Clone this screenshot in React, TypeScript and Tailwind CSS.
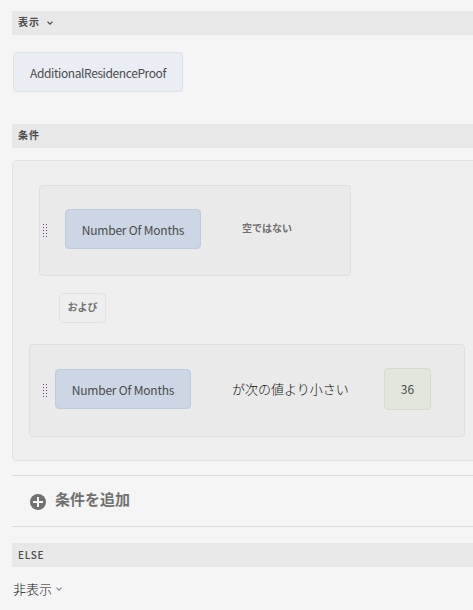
import type { ReactNode } from "react";

function SectionHeader({ children }: { children: ReactNode }) {
  return (
    <div className="flex h-6 shrink-0 items-center bg-[#e8e8e8] pl-1.5 text-[10px] leading-none font-bold tracking-[1px] text-[#4b4b4b]">
      {children}
    </div>
  );
}

function Chevron({ className }: { className: string }) {
  return (
    <svg viewBox="0 0 6 4" fill="none" stroke="currentColor" strokeWidth="1.3" className={className}>
      <path d="M0.5 0.6 L3 3.1 L5.5 0.6" />
    </svg>
  );
}

function DragHandle() {
  return (
    <div className="grid w-1 grid-cols-2 gap-x-0.5 gap-y-0.5">
      {Array.from({ length: 10 }, (_, i) => (
        <span key={i} className="size-px bg-[#70407e]" />
      ))}
    </div>
  );
}

function MonthsChip() {
  return (
    <div className="flex h-10 w-[136px] items-center justify-center rounded-[4px] border border-[#bfcadd] bg-[#ccd6e5] pt-px text-[12px] tracking-[-0.2px] whitespace-nowrap text-[#4b4b4b]">
      Number Of Months
    </div>
  );
}

export default function App() {
  return (
    <main className="flex h-[610px] w-[473px] flex-col overflow-hidden bg-[#f5f5f5] pt-[11px] pl-3 font-['Noto_Sans_CJK_JP',sans-serif]">
      <SectionHeader>
        <span className="pb-0.5">表示</span>
        <Chevron className="ml-[7px] h-1 w-1.5" />
      </SectionHeader>

      <div className="mt-[17px] ml-px flex h-10 w-[170px] shrink-0 items-center justify-center rounded-[4px] border border-[#dde1e6] bg-[#eaeef4] pt-px text-[12px] tracking-[-0.4px] text-[#4b4b4b]">
        AdditionalResidenceProof
      </div>

      <div className="mt-8">
        <SectionHeader>
          <span className="pb-0.5">条件</span>
        </SectionHeader>
      </div>

      <section className="mt-3 h-[301px] w-[480px] shrink-0 rounded-[5px] border border-[#e2e2e2] bg-[#efefef] pt-6 pl-4">
        <div className="ml-2.5 flex h-[91px] w-[312px] items-center rounded-[4px] border border-[#dfdfdf] bg-[#eaeaea] pl-[3px]">
          <DragHandle />
          <div className="-mt-[3px] ml-[18px]">
            <MonthsChip />
          </div>
          <span className="-mt-[7px] ml-[41px] text-[10px] font-bold text-[#707070]">空ではない</span>
        </div>

        <div className="mt-[17px] ml-[30px] flex h-[30px] w-[47px] items-center justify-center rounded-[4px] border border-[#e2e2e2] bg-[#eeeeee] pb-[3px] text-[10px] font-bold text-[#707070]">
          および
        </div>

        <div className="mt-[21px] flex h-[93px] w-[436px] items-center rounded-[4px] border border-[#dfdfdf] bg-[#eaeaea] pl-[13px]">
          <DragHandle />
          <div className="-mt-[3px] ml-2">
            <MonthsChip />
          </div>
          <span className="-mt-[4px] ml-[41px] w-[152px] text-[13px] font-light whitespace-nowrap text-[#111]">が次の値より小さい</span>
          <div className="-mt-[3px] flex h-[42px] w-[47px] items-center justify-center rounded-[4px] border border-[#d5dbd2] bg-[#e1e7dd] text-[12px] text-[#4b4b4b]">
            36
          </div>
        </div>
      </section>

      <button className="mt-3.5 flex h-[52px] shrink-0 items-center border-y border-[#dadada] pl-[18px] text-[#707070]">
        <svg viewBox="0 0 16 16" className="mt-px size-4">
          <circle cx="8" cy="8" r="8" fill="#707070" />
          <path d="M8 3v10M3 8h10" stroke="#f5f5f5" strokeWidth="2" />
        </svg>
        <span className="-mt-[3px] ml-[9px] text-[15px] font-bold">条件を追加</span>
      </button>

      <div className="mt-4">
        <SectionHeader>
          <span className="pb-px text-[10px] font-medium tracking-[0.7px]">ELSE</span>
        </SectionHeader>
      </div>

      <div className="mt-3 ml-px flex h-5 items-center text-[13px] text-[#111]">
        <span className="pb-px font-light">非表示</span>
        <Chevron className="ml-1 h-1 w-1.5 text-[#8c8c8c]" />
      </div>
    </main>
  );
}
